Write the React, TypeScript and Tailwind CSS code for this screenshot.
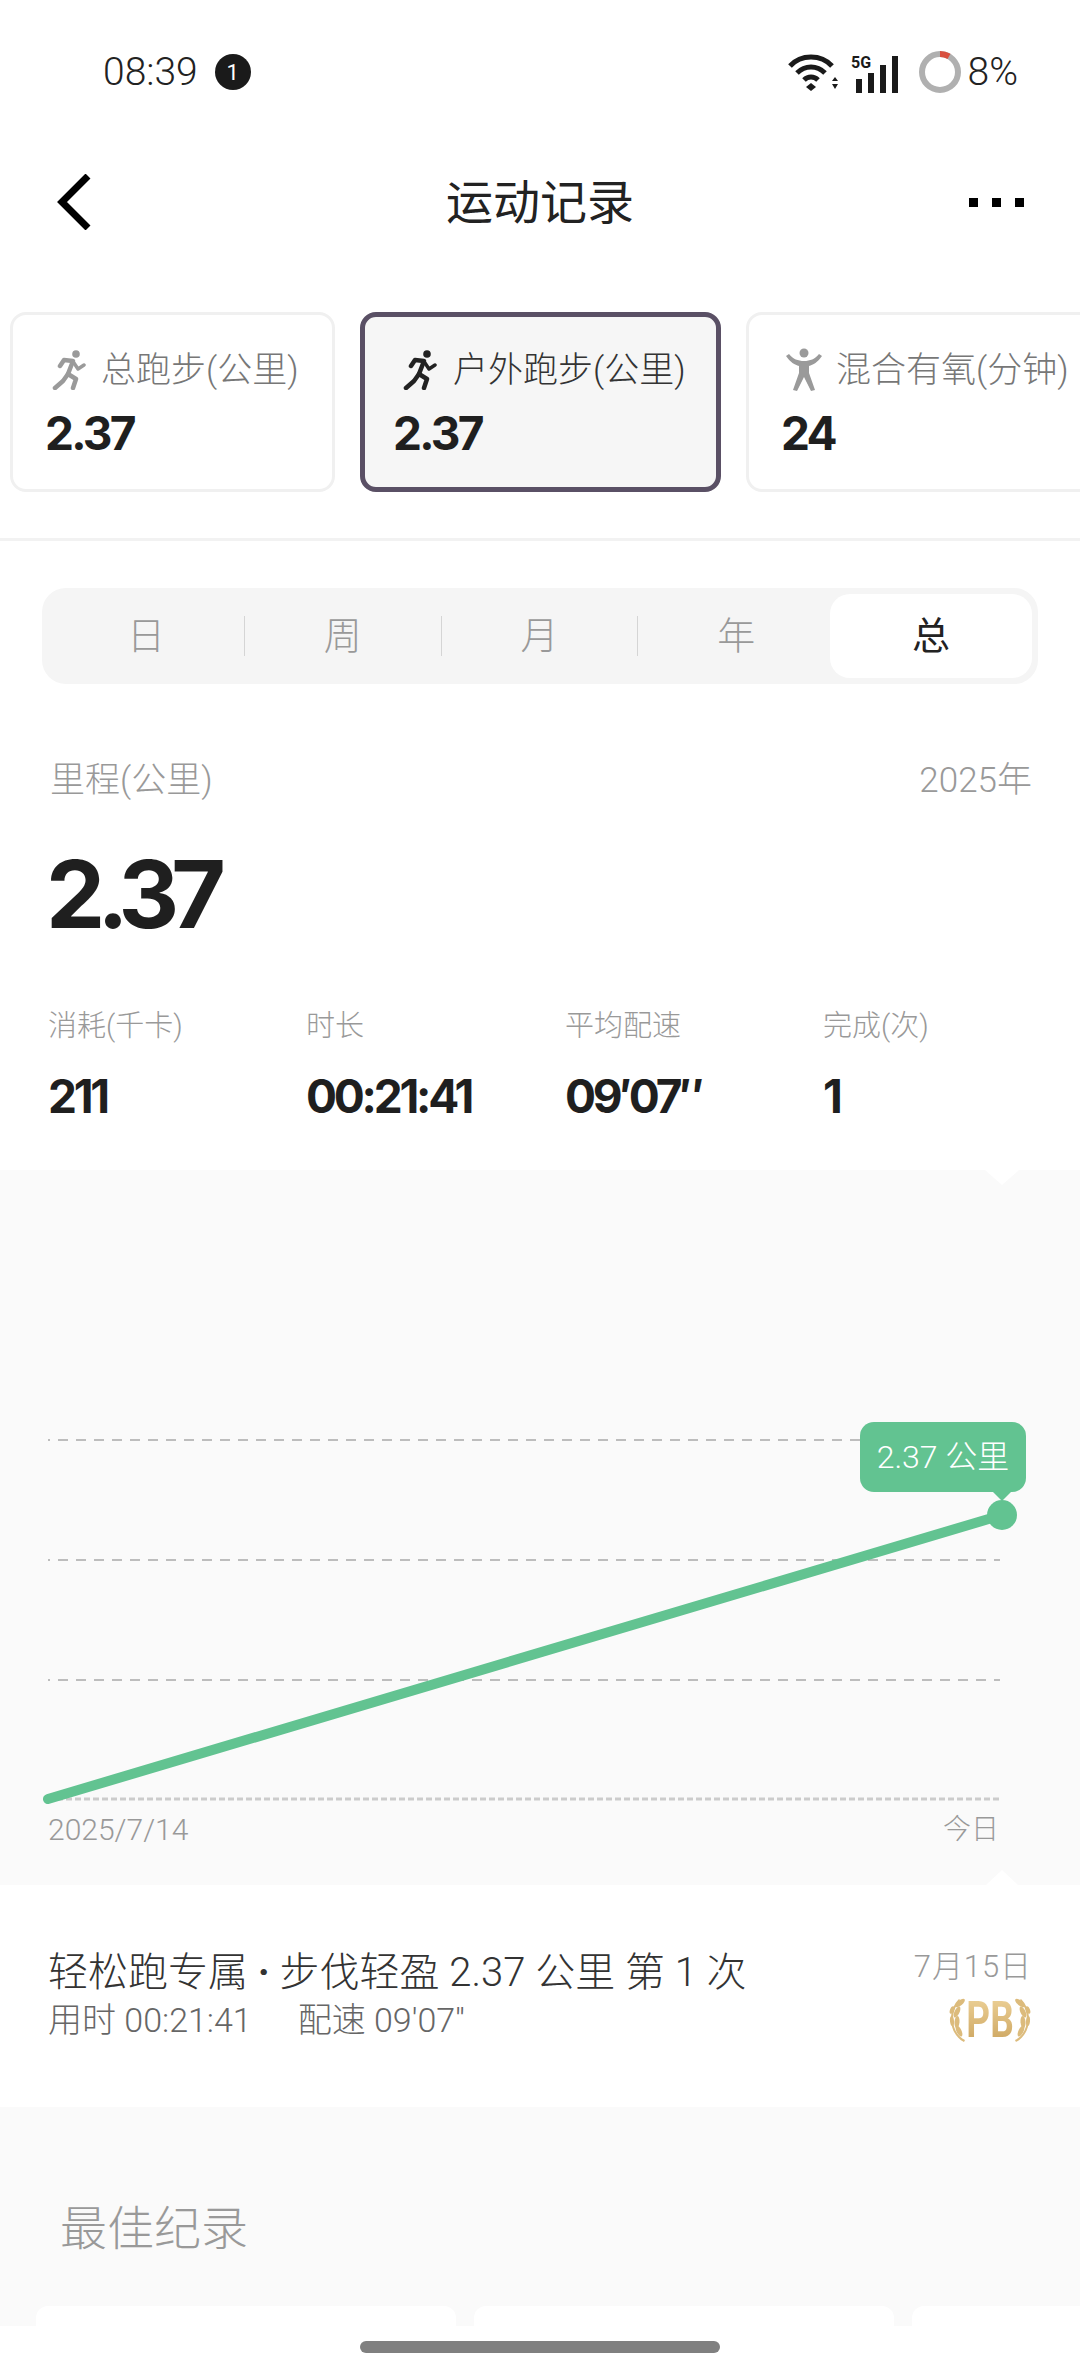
const num = "font-['Inter',sans-serif] font-bold text-[#1f1f1f]";

function RunnerIcon({ className }: { className: string }) {
  return (
    <svg viewBox="0 0 34 40" className={className} fill="none" stroke="currentColor" strokeWidth="4.5" strokeLinejoin="round" strokeLinecap="round">
      <circle cx="24" cy="4" r="3.8" fill="currentColor" stroke="none" />
      <path d="M8 16 L12 10 L21 11 L16 24 L24 29 L21 38" />
      <path d="M16 24 L11 31 L3 38" />
      <path d="M22 13 L26 19 L32 15" strokeWidth="3.5" />
    </svg>
  );
}

function AerobicIcon({ className }: { className: string }) {
  return (
    <svg viewBox="0 0 40 44" className={className} fill="currentColor">
      <circle cx="20" cy="5" r="4.5" />
      <path d="M2 8 L5 6 C9 11 14 13 20 13 C26 13 31 11 35 6 L38 8 C34 14 29 17 25 18 L25 25 L31 42 L27 43 L20 29 L13 43 L9 42 L15 25 L15 18 C11 17 6 14 2 8 Z" />
    </svg>
  );
}

function SportCard({
  label,
  value,
  active,
  width,
  icon,
}: {
  label: string;
  value: string;
  active?: boolean;
  width: string;
  icon: 'run' | 'aerobic';
}) {
  return (
    <div
      className={`${width} h-[180px] shrink-0 rounded-[16px] ${
        active ? 'border-[5px] border-[#5a5065] bg-[#f6f6f6] pl-[28px] pt-[31px]' : 'border-[3px] border-[#f0f0f0] bg-white pl-[32px] pt-[33px]'
      }`}
    >
      <div className={`flex h-[44px] items-center text-[35px] leading-none ${active ? 'text-[#333]' : 'text-[#777]'}`}>
        {icon === 'run' ? (
          <RunnerIcon className={`h-[40px] w-[34px] shrink-0 ${active ? 'ml-[10px] mr-[16px] text-[#222]' : 'ml-[7px] mr-[15px] text-[#9a9a9a]'}`} />
        ) : (
          <AerobicIcon className="ml-[2px] mr-[11px] h-[44px] w-[42px] shrink-0 text-[#9a9a9a]" />
        )}
        <span className="whitespace-nowrap font-light">{label}</span>
      </div>
      <div className={`${num} mt-[13px] text-[46px] leading-[56px] tracking-[-0.06em]`}>{value}</div>
    </div>
  );
}

function Stat({ label, value, width }: { label: string; value: string; width: string }) {
  return (
    <div className={width}>
      <div className="text-[29px] font-light leading-[40px] text-[#999]">{label}</div>
      <div className={`${num} mt-[22px] text-[46px] leading-[56px] tracking-[-0.07em]`}>{value}</div>
    </div>
  );
}

function Laurel({ flip }: { flip?: boolean }) {
  return (
    <svg viewBox="0 0 18 46" className={`h-[46px] w-[18px] ${flip ? '-scale-x-100' : ''}`} fill="#dcbb7c">
      <path d="M16 45 C8 41 3 32 3 22 C3 14 6 7 11 2 L12 3 C8 8 5 15 5 22 C5 31 9 39 17 43 Z" />
      <ellipse cx="12" cy="6" rx="2.5" ry="6" transform="rotate(50 12 6)" />
      <ellipse cx="9" cy="15" rx="2.5" ry="6" transform="rotate(25 9 15)" />
      <ellipse cx="9" cy="25" rx="2.5" ry="6" transform="rotate(5 9 25)" />
      <ellipse cx="11" cy="34" rx="2.5" ry="6" transform="rotate(-25 11 34)" />
      <ellipse cx="4" cy="24" rx="2" ry="5" transform="rotate(-5 4 24)" />
      <ellipse cx="4" cy="13" rx="2" ry="4" transform="rotate(20 4 13)" />
    </svg>
  );
}

export default function App() {
  return (
    <div className="flex h-[2373px] w-[1080px] flex-col overflow-hidden bg-white font-['Roboto','Noto_Sans_CJK_SC',sans-serif] text-[#222]">
      {/* status bar */}
      <div className="flex h-[144px] shrink-0 items-center justify-between pl-[103px] pr-[62px]">
        <div className="flex items-center gap-[17px]">
          <span className="text-[39px] font-light leading-none">08:39</span>
          <span className="flex h-[36px] w-[36px] items-center justify-center rounded-full bg-[#1a1a1a] text-[22px] text-white">1</span>
        </div>
        <div className="flex items-center">
          <svg viewBox="0 0 52 38" className="h-[38px] w-[52px]" fill="none" stroke="#1a1a1a" strokeWidth="5">
            <path d="M2 13 C13 1 33 1 44 13" />
            <path d="M9 20 C17 12 29 12 37 20" />
            <path d="M16 27 C20 23 26 23 30 27" />
            <path d="M23 30 L18 34 L23 38 L28 34 Z" fill="#1a1a1a" stroke="none" />
            <path d="M47 24 L44 28 L50 28 Z M47 36 L44 31 L50 31 Z" fill="#1a1a1a" stroke="none" />
          </svg>
          <svg viewBox="0 -4 54 42" className="ml-[11px] h-[42px] w-[54px]" fill="#1a1a1a">
            <text x="0" y="13" fontSize="16" fontWeight="700" fontFamily="Roboto">5G</text>
            <rect x="5" y="24" width="6" height="14" />
            <rect x="17" y="18" width="6" height="20" />
            <rect x="29" y="10" width="6" height="28" />
            <rect x="41" y="1" width="6" height="37" />
          </svg>
          <svg viewBox="0 0 42 42" className="ml-[14px] h-[42px] w-[42px]" fill="none" strokeWidth="6">
            <circle cx="21" cy="21" r="18" stroke="#b0b0b0" />
            <path d="M21 3 A18 18 0 0 1 30 5.4" stroke="#d8503f" />
          </svg>
          <span className="ml-[7px] text-[39px] font-light leading-none">8%</span>
        </div>
      </div>

      {/* nav */}
      <div className="grid h-[116px] shrink-0 grid-cols-3 items-center px-[56px]">
        <svg viewBox="0 0 36 56" className="h-[56px] w-[36px]" fill="none" stroke="#000" strokeWidth="7">
          <path d="M32 2 L6 28 L32 54" />
        </svg>
        <span className="whitespace-nowrap text-center text-[47px] leading-none">运动记录</span>
        <div className="flex justify-end gap-[14px]">
          <span className="h-[9px] w-[9px] bg-black" />
          <span className="h-[9px] w-[9px] bg-black" />
          <span className="h-[9px] w-[9px] bg-black" />
        </div>
      </div>

      {/* sport cards */}
      <div className="mt-[52px] flex shrink-0 gap-[25px] pl-[10px]">
        <SportCard label="总跑步(公里)" value="2.37" width="w-[325px]" icon="run" />
        <SportCard label="户外跑步(公里)" value="2.37" width="w-[361px]" icon="run" active />
        <SportCard label="混合有氧(分钟)" value="24" width="w-[361px]" icon="aerobic" />
      </div>
      <div className="mt-[46px] h-[3px] shrink-0 bg-[#f2f2f2]" />

      {/* period tabs */}
      <div className="mx-[42px] mt-[47px] flex h-[96px] shrink-0 items-center rounded-[24px] bg-[#f5f5f5] px-[6px] text-[38px] text-[#999]">
        <span className="w-[196px] text-center font-light">日</span>
        <span className="h-[40px] w-[1px] bg-[#d5d5d5]" />
        <span className="w-[196px] text-center font-light">周</span>
        <span className="h-[40px] w-[1px] bg-[#d5d5d5]" />
        <span className="w-[196px] text-center font-light">月</span>
        <span className="h-[40px] w-[1px] bg-[#d5d5d5]" />
        <span className="w-[196px] text-center font-light">年</span>
        <span className="ml-[-4px] flex h-[84px] w-[202px] items-center justify-center rounded-[20px] bg-white text-[#222]">总</span>
      </div>

      {/* summary */}
      <div className="mt-[73px] flex shrink-0 items-center justify-between pl-[50px] pr-[48px] text-[35px] font-light leading-[48px] text-[#999]">
        <span>里程(公里)</span>
        <span>2025年</span>
      </div>
      <div className={`${num} mt-[34px] pl-[46px] text-[94px] leading-[110px] tracking-[-0.085em]`}>2.37</div>
      <div className="mt-[57px] flex shrink-0 pl-[48px]">
        <Stat label="消耗(千卡)" value="211" width="w-[258px]" />
        <Stat label="时长" value="00:21:41" width="w-[259px]" />
        <Stat label="平均配速" value={'09\u203207\u2033'} width="w-[258px]" />
        <Stat label="完成(次)" value="1" width="w-[200px]" />
      </div>

      {/* chart */}
      <div className="relative mt-[46px] h-[715px] shrink-0 bg-[#fafafa]">
        <svg viewBox="0 0 1080 715" className="h-[715px] w-[1080px]" fill="none">
          <path d="M985 0 L1002 15 L1019 0 Z" fill="#fff" />
          <path d="M986 715 L1002 700 L1018 715 Z" fill="#fff" />
          <g stroke="#bdbdbd" strokeWidth="2" strokeDasharray="10 8" strokeDashoffset="8">
            <path d="M48 270 H1000" />
            <path d="M48 390 H1000" />
            <path d="M48 510 H1000" />
          </g>
          <path d="M48 629 H1002" stroke="#cccccc" strokeWidth="3" strokeDasharray="6 3" />
          <path d="M48 629 L1002 345" stroke="#62c391" strokeWidth="10" strokeLinecap="round" />
          <circle cx="1002" cy="345" r="15" fill="#62c391" />
        </svg>
        {/* tooltip over the line */}
        <div className="absolute left-[860px] top-[252px] flex h-[70px] w-[166px] items-center justify-center rounded-[14px] bg-[#62c391] text-[32px] font-light leading-none text-white">
          2.37 公里
          <span className="absolute left-[131px] top-[68px] h-0 w-0 border-x-[11px] border-t-[11px] border-x-transparent border-t-[#62c391]" />
        </div>
        <span className="absolute left-[48px] top-[640px] text-[30px] font-light leading-[40px] text-[#999]">2025/7/14</span>
        <span className="absolute left-[943px] top-[640px] text-[28px] font-light leading-[40px] text-[#999]">今日</span>
      </div>

      {/* latest run */}
      <div className="flex h-[222px] shrink-0 justify-between bg-white pl-[48px] pr-[48px] pt-[64px]">
        <div>
          <div className="whitespace-nowrap text-[40px] font-light leading-[48px] text-[#333]">轻松跑专属 <b className="font-bold">·</b> 步伐轻盈 2.37 公里 第 1 次</div>
          <div className="mt-[1px] flex gap-[46px] text-[34px] font-light leading-[44px] text-[#666]">
            <span>用时 00:21:41</span>
            <span>配速 09'07''</span>
          </div>
        </div>
        <div className="flex flex-col items-end">
          <span className="mt-[-4px] whitespace-nowrap text-[31px] font-light leading-[44px] tracking-[0.03em] text-[#999]">7月15日</span>
          <div className="mt-[8px] flex items-center">
            <Laurel />
            <span className="mx-[-8px] scale-x-[0.74] bg-linear-to-b from-[#ecd096] to-[#cda660] bg-clip-text font-['Roboto',sans-serif] text-[50px] font-bold leading-[46px] text-transparent">PB</span>
            <Laurel flip />
          </div>
        </div>
      </div>

      {/* best records */}
      <div className="h-[219px] shrink-0 overflow-hidden bg-[#fafafa] pl-[60px] pt-[94px]">
        <div className="text-[47px] font-light leading-[56px] text-[#999]">最佳纪录</div>
        <div className="ml-[-24px] mt-[49px] flex gap-[18px]">
          <div className="h-[60px] w-[420px] shrink-0 rounded-t-[12px] bg-white" />
          <div className="h-[60px] w-[420px] shrink-0 rounded-t-[12px] bg-white" />
          <div className="h-[60px] w-[420px] shrink-0 rounded-t-[12px] bg-white" />
        </div>
      </div>

      {/* home bar */}
      <div className="flex flex-1 justify-center bg-white pt-[15px]">
        <div className="h-[12px] w-[360px] rounded-full bg-[#808080]" />
      </div>
    </div>
  );
}
